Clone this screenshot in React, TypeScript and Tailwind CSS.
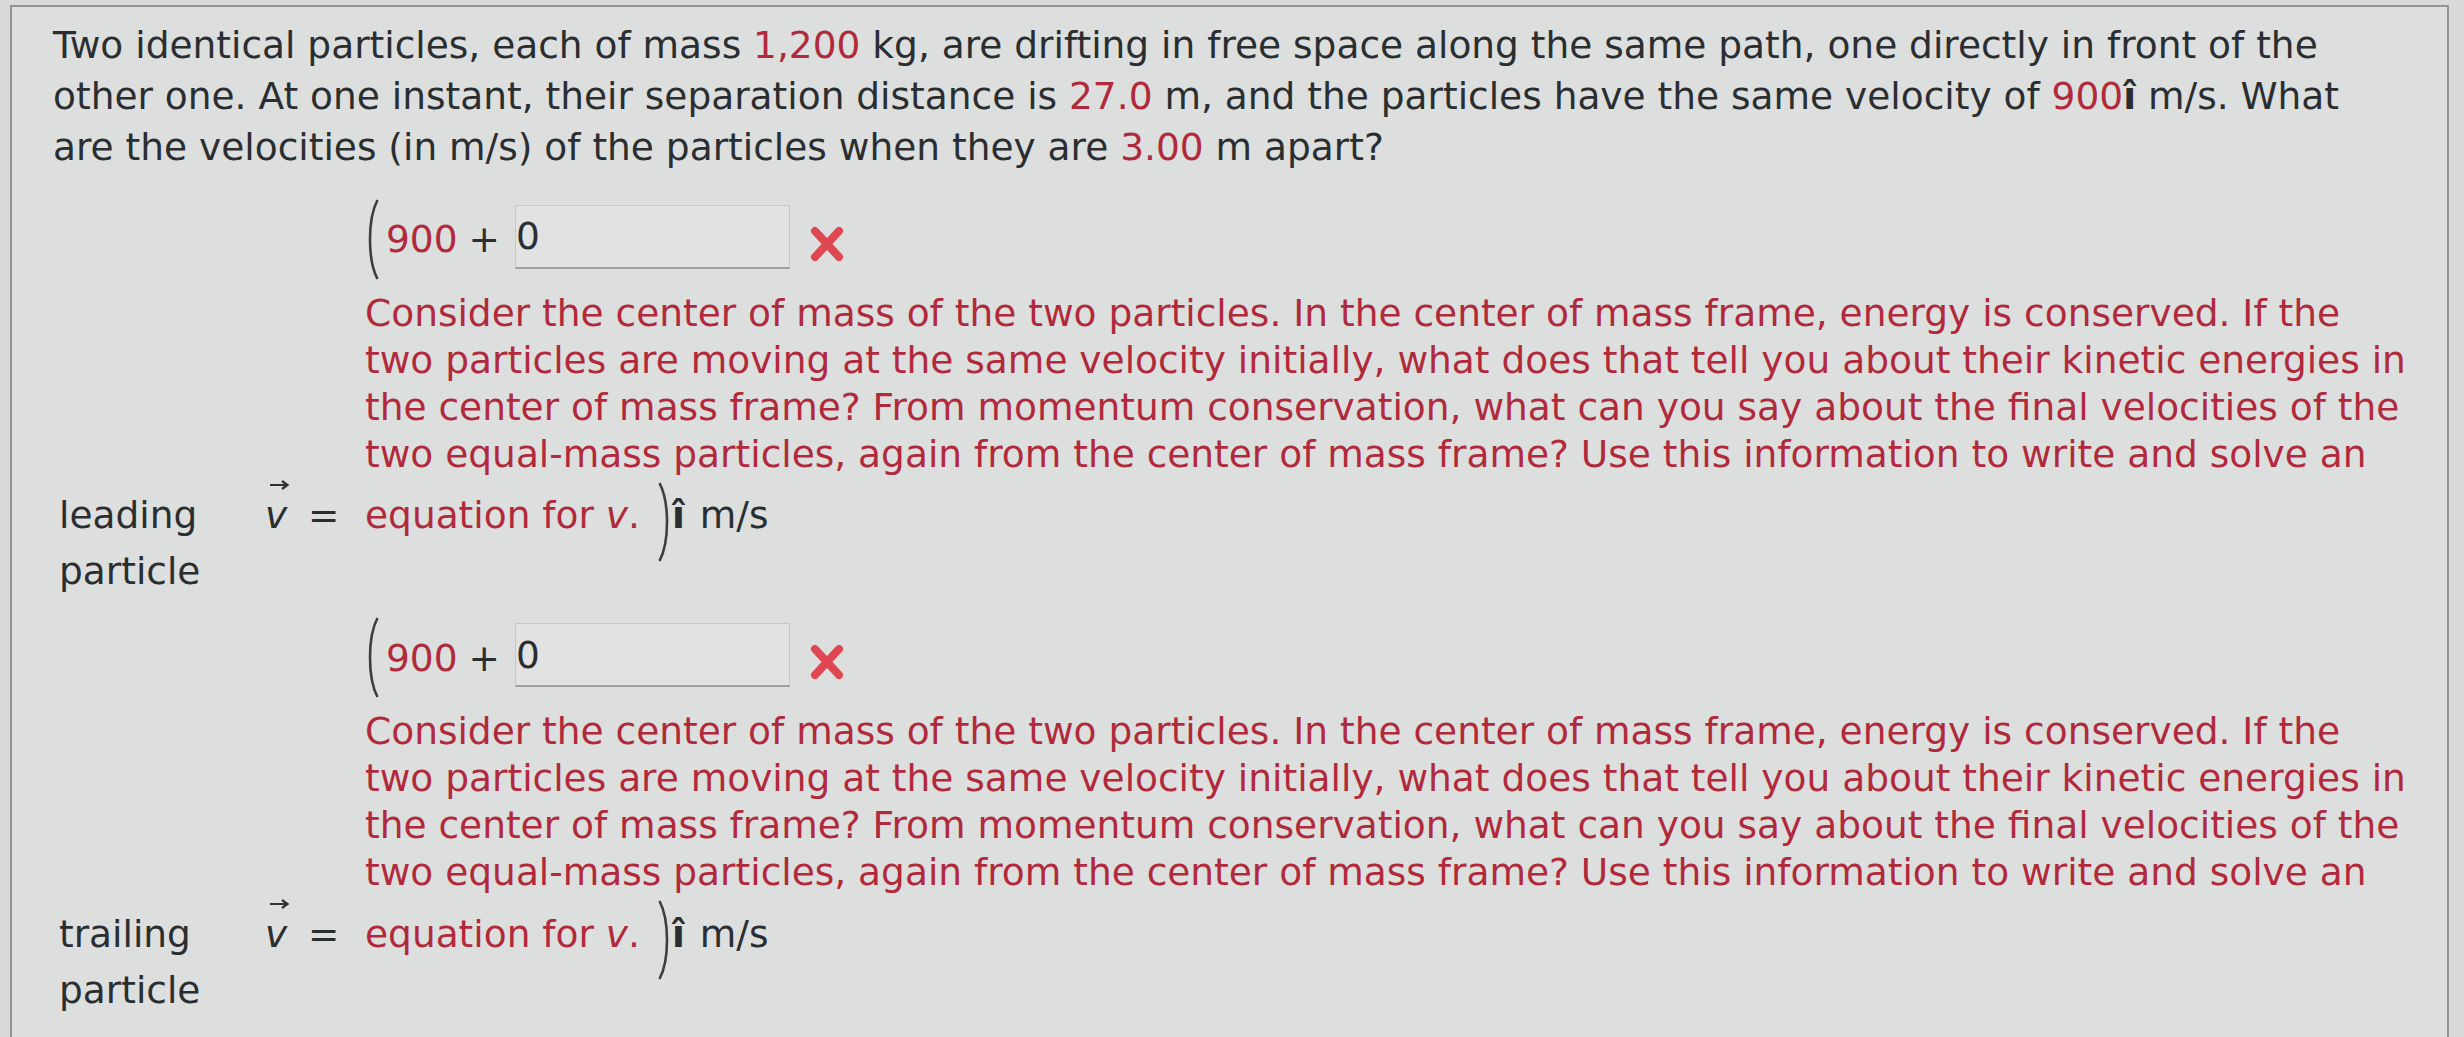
import React from 'react'

const red = 'text-[#b12a3c]'

function OpenParen() {
  return (
    <svg width="14" height="81" viewBox="0 0 14 81" className="shrink-0">
      <path d="M12.5 1 C2.5 20 2.5 61 12.5 80" fill="none" stroke="#3c3f42" strokeWidth="2.6" />
    </svg>
  )
}

function CloseParen() {
  return (
    <svg width="14" height="80" viewBox="0 0 14 80" className="shrink-0">
      <path d="M1.5 1 C11.5 20 11.5 60 1.5 79" fill="none" stroke="#3c3f42" strokeWidth="2.6" />
    </svg>
  )
}

function WrongMark() {
  return (
    <svg width="38" height="38" viewBox="0 0 38 38" className="ml-[18px] mt-[8px] shrink-0">
      <path d="M7 6 L31 32 M31 6 L7 32" stroke="#df4853" strokeWidth="8" strokeLinecap="round" fill="none" />
    </svg>
  )
}

function VectorV() {
  return (
    <span className="relative inline-block w-[43px] italic">
      v
      <svg width="22" height="12" viewBox="0 0 22 12" className="absolute -top-[8px] left-[3px]">
        <path d="M2 6 H19 M14 2 L19.5 6 L14 10" stroke="#2e3134" strokeWidth="2.2" fill="none" />
      </svg>
    </span>
  )
}

function Answer({ label, className = '' }: { label: string; className?: string }) {
  return (
    <div className={`ml-[6px] grid grid-cols-[206px_100px_1fr] items-baseline ${className}`}>
      {/* answer entry */}
      <div className="col-start-3 flex h-[81px] items-center">
        <OpenParen />
        <span className={`ml-[7px] ${red}`}>900</span>
        <span className="ml-[11px]">+</span>
        <div className="ml-[15px] mt-[6px] flex h-[64px] w-[275px] items-center self-start border border-[#c7c9c8] border-b-2 border-b-[#9fa1a0] bg-[#e1e2e1]">
          0
        </div>
        <WrongMark />
      </div>

      {/* feedback */}
      <p className={`col-start-3 mt-[10px] whitespace-nowrap leading-[47px] ${red}`}>
        Consider the center of mass of the two particles. In the center of mass frame, energy is conserved. If the
        <br />
        two particles are moving at the same velocity initially, what does that tell you about their kinetic energies in
        <br />
        the center of mass frame? From momentum conservation, what can you say about the final velocities of the
        <br />
        two equal-mass particles, again from the center of mass frame? Use this information to write and solve an
      </p>

      <div className="leading-[56px]">
        {label}
        <br />
        particle
      </div>
      <div className="whitespace-nowrap">
        <VectorV />
        <span>=</span>
      </div>
      <div className="flex h-[75px] items-center whitespace-nowrap">
        <span className={red}>
          equation for <span className="italic">v</span>.
        </span>
        <span className="ml-[18px] mt-[12px] flex">
          <CloseParen />
        </span>
        <span className="font-bold">î</span>
        <span className="ml-[15px]">m/s</span>
      </div>
    </div>
  )
}

export default function App() {
  return (
    <div className="min-h-screen bg-[#d9dbda] pt-[5px] pl-[10px] pr-[15px] font-['DejaVu_Sans',sans-serif] text-[37.5px] text-[#2b2e31]">
      <div className="min-h-[1032px] border-x-2 border-t-2 border-[#929493] bg-[#dddfde] pl-[41px] pt-[13px]">
        <p className="whitespace-nowrap leading-[51px]">
          Two identical particles, each of mass <span className={red}>1,200</span> kg, are drifting in free space along the same path, one directly in front of the
          <br />
          other one. At one instant, their separation distance is <span className={red}>27.0</span> m, and the particles have the same velocity of{' '}
          <span className={red}>900</span>
          <span className="font-bold">î</span> m/s. What
          <br />
          are the velocities (in m/s) of the particles when they are <span className={red}>3.00</span> m apart?
        </p>

        <Answer label="leading" className="mt-[26px]" />
        <Answer label="trailing" className="mt-[18px]" />
      </div>
    </div>
  )
}
